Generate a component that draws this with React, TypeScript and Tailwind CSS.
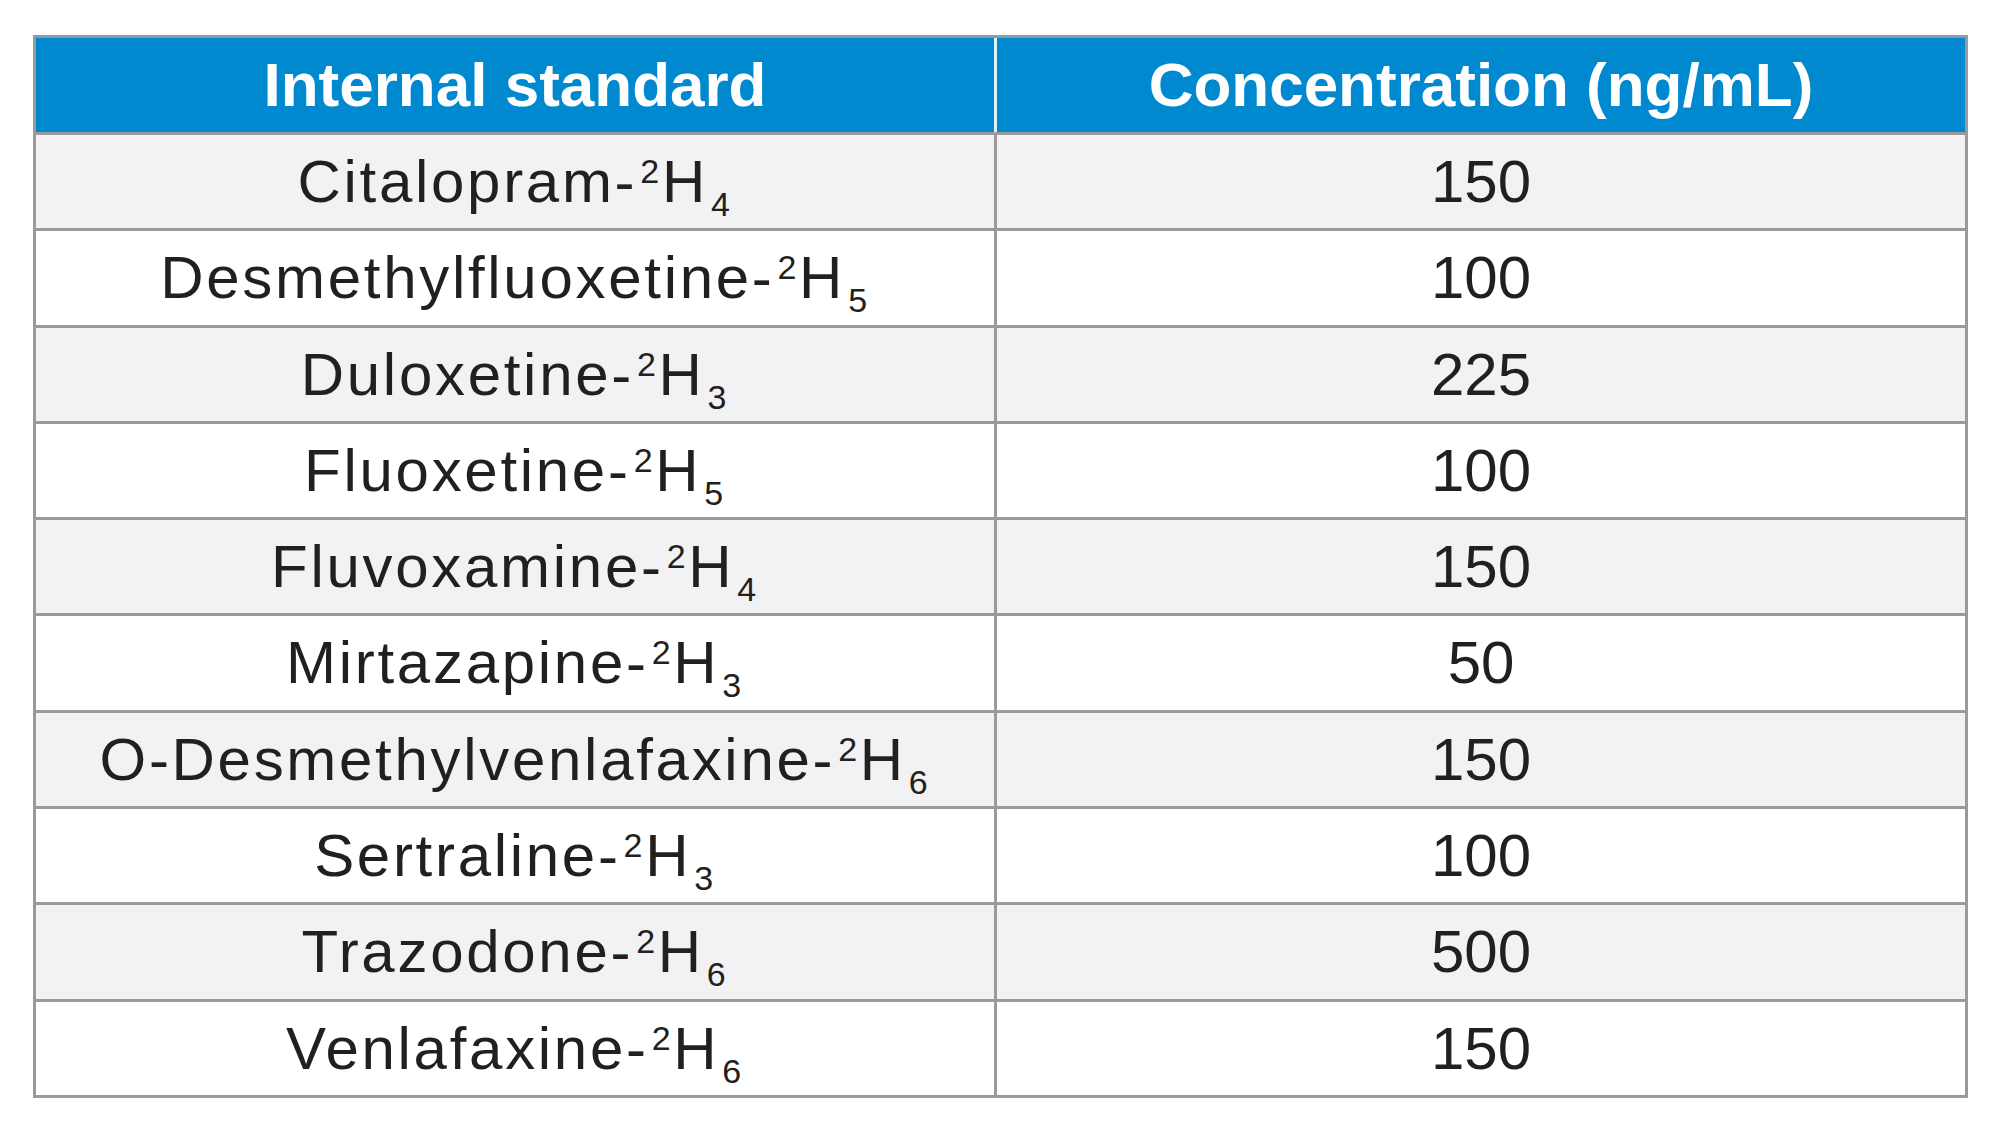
const rows = [
  ["Citalopram", "4", "150"],
  ["Desmethylfluoxetine", "5", "100"],
  ["Duloxetine", "3", "225"],
  ["Fluoxetine", "5", "100"],
  ["Fluvoxamine", "4", "150"],
  ["Mirtazapine", "3", "50"],
  ["O-Desmethylvenlafaxine", "6", "150"],
  ["Sertraline", "3", "100"],
  ["Trazodone", "6", "500"],
  ["Venlafaxine", "6", "150"],
];

export default function App() {
  return (
    <div className="w-[2000px] h-[1141px] bg-white pl-[33px] pt-[35px] font-['Liberation_Sans',Arial,sans-serif]">
      <div className="w-[1935px] border-[3px] border-[#9a9a9c] border-t-[#8b9aa6]">
        <div className="grid grid-cols-[958px_1fr] h-[94px] bg-[#0089cf] text-white font-bold text-[62px] leading-[94px] text-center">
          <div>Internal standard</div>
          <div className="border-l-[3px] border-[#dff3fb]">Concentration (ng/mL)</div>
        </div>
        {rows.map((r, i) => (
          <div
            key={r[0]}
            className={
              "grid grid-cols-[958px_1fr] h-[96.3px] border-t-[3px] border-[#9a9a9c] text-[#231f20] text-[60px] leading-[93px] text-center " +
              (i % 2 === 0 ? "bg-[#f2f2f4]" : "bg-white")
            }
          >
            <div className="tracking-[0.045em]">
              {r[0]}-<span className="text-[34px] leading-none align-[19px] ml-[3px]">2</span>H
              <span className="text-[34px] leading-none align-[-14px] ml-[3px]">{r[1]}</span>
            </div>
            <div className="border-l-[3px] border-[#9a9a9c]">{r[2]}</div>
          </div>
        ))}
      </div>
    </div>
  );
}
